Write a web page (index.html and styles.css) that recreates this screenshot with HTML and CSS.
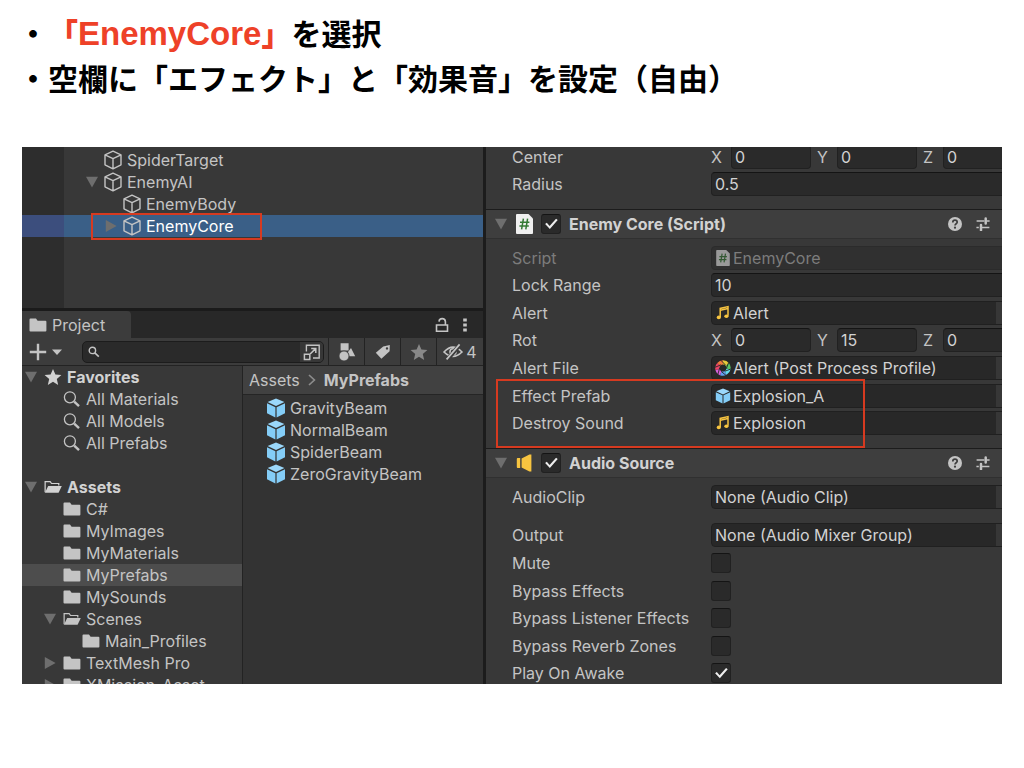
FILE: index.html
```html
<!DOCTYPE html>
<html lang="ja">
<head>
<meta charset="utf-8">
<title>EnemyCore</title>
<link rel="stylesheet" href="styles.css">
</head>
<body>
<svg class="defs" aria-hidden="true">
  <symbol id="cube" viewBox="0 0 20 20"><path d="M10 1.2 18 4.8V14.8L10 18.8 2 14.8V4.8ZM2 4.8 10 8.6 18 4.8M10 8.6V18.8" fill="none" stroke="currentColor" stroke-width="1.4" stroke-linejoin="round"/></symbol>
  <symbol id="prefab" viewBox="0 0 20 20"><path d="M10 .6 18.4 4 10 8 1.6 4Z" fill="#9bd8fb"/><path d="M1 5.2 9.4 9.2V19.4L1 15.2Z" fill="#84cdf7"/><path d="M19 5.2 10.6 9.2V19.4L19 15.2Z" fill="#84cdf7"/></symbol>
  <symbol id="folder" viewBox="0 0 18 18"><path d="M.5 3.6Q.5 2.6 1.5 2.6H7L8.6 4.8H16.4Q17.4 4.8 17.4 5.8V14.6Q17.4 15.6 16.4 15.6H1.5Q.5 15.6 .5 14.6Z" fill="currentColor"/></symbol>
  <symbol id="folder-open" viewBox="0 0 19 18"><path d="M1.2 14.5V3.3H6.5L8 5.3H15.6V7.5" fill="none" stroke="currentColor" stroke-width="1.3"/><path d="M4.4 8H18.8L15.4 15.2H1Z" fill="currentColor"/></symbol>
  <symbol id="star" viewBox="0 0 18 18"><path d="M9 1 11.4 6.6 17.4 7.1 12.8 11 14.2 17 9 13.8 3.8 17 5.2 11 .6 7.1 6.6 6.6Z" fill="currentColor"/></symbol>
  <symbol id="find" viewBox="0 0 18 18"><circle cx="6.9" cy="7.3" r="5.5" fill="none" stroke="currentColor" stroke-width="1.3"/><path d="M11.2 11.6 16 16.2" stroke="currentColor" stroke-width="2.4"/></symbol>
  <symbol id="lens" viewBox="0 0 12 12"><circle cx="4.4" cy="4.4" r="3.2" fill="none" stroke="currentColor" stroke-width="1.4"/><path d="M6.8 6.8 10.8 10.6" stroke="currentColor" stroke-width="1.6"/></symbol>
  <symbol id="down" viewBox="0 0 12 12"><path d="M0 .8H12L6 11.6Z" fill="currentColor"/></symbol>
  <symbol id="right" viewBox="0 0 12 12"><path d="M.8 0V12L11.6 6Z" fill="currentColor"/></symbol>
  <symbol id="note" viewBox="0 0 16 16"><path d="M5.2 12.2V3.4L13 1.6V10.8M5.2 5.2 13 3.4" fill="none" stroke="#f7c440" stroke-width="1.5"/><ellipse cx="3.8" cy="12.4" rx="2.1" ry="1.8" fill="#f7c440"/><ellipse cx="11.4" cy="11.2" rx="2.1" ry="1.8" fill="#f7c440"/></symbol>
  <symbol id="script" viewBox="0 0 17 20"><path d="M1 0H12.5L17 4.5V19Q17 20 16 20H1Q0 20 0 19V1Q0 0 1 0Z" fill="#f0f0f0"/><path d="M7.4 4.6 5.6 15.4M11.6 4.6 9.8 15.4M4 8.2H13.4M3.4 12H12.8" stroke="#347a34" stroke-width="1.5"/></symbol>
  <symbol id="aperture" viewBox="0 0 16 16"><g fill="none" stroke-width="4.2"><path d="M8 2.4A5.6 5.6 0 0 1 12.4 4.5" stroke="#e8c93a"/><path d="M12.4 4.5A5.6 5.6 0 0 1 13.5 9" stroke="#59c466"/><path d="M13.5 9A5.6 5.6 0 0 1 10.6 13" stroke="#62dcee"/><path d="M10.6 13A5.6 5.6 0 0 1 5.8 13.2" stroke="#5f9df0"/><path d="M5.8 13.2A5.6 5.6 0 0 1 2.5 9.4" stroke="#d760dc"/><path d="M2.5 9.4A5.6 5.6 0 0 1 3.8 4.3" stroke="#ee4466"/><path d="M3.8 4.3A5.6 5.6 0 0 1 8 2.4" stroke="#f07a3c"/></g><path d="M6 .4 10.4 5M13.6 2.6 11.4 8.4M15.8 9 10 11.2M11 15.4 6.2 11.4M3 14 4.6 8M.3 7.2 6 4.8" stroke="#262626" stroke-width=".9"/></symbol>
  <symbol id="speaker" viewBox="0 0 17 18"><path d="M.8 5Q.8 4 1.6 4H4.2V14H1.6Q.8 14 .8 13Z" fill="#f7c440"/><path d="M5.6 4.4 13.4.6H15.4V17.4H13.4L5.6 13.6Z" fill="#f7c440"/></symbol>
  <symbol id="help" viewBox="0 0 14 14"><circle cx="7" cy="7" r="7" fill="currentColor"/><path d="M4.8 5.4Q4.8 3.2 7 3.2T9.2 5.3C9.2 6.8 7 6.8 7 8.6" fill="none" stroke="#3e3e3e" stroke-width="1.7"/><circle cx="7" cy="10.7" r="1.1" fill="#3e3e3e"/></symbol>
  <symbol id="sliders" viewBox="0 0 14 14"><path d="M.6 4H8.4M11 4H13.6M.4 10.6H2.8M5.8 10.6H13.4" stroke="currentColor" stroke-width="1.5"/><path d="M9.7 1.4V6.6M5 8V13.2" stroke="currentColor" stroke-width="2.5" stroke-linecap="round"/></symbol>
  <symbol id="lock" viewBox="0 0 14 16"><path d="M1.5 8H12.5V14.2H1.5ZM4 4.6Q4.2 1.6 7.2 1.6T10.4 4.6V8" fill="none" stroke="currentColor" stroke-width="1.6"/></symbol>
  <symbol id="dots" viewBox="0 0 6 16"><path d="M1.2 1.4H4.8V4.6H1.2ZM1.2 6.4H4.8V9.6H1.2ZM1.2 11.4H4.8V14.6H1.2Z" fill="currentColor"/></symbol>
  <symbol id="plus" viewBox="0 0 18 18"><path d="M9 .8V17.2M.8 9H17.2" stroke="currentColor" stroke-width="2.4"/></symbol>
  <symbol id="caret" viewBox="0 0 12 12"><path d="M1 3.4H11L6 9Z" fill="currentColor"/></symbol>
  <symbol id="open" viewBox="0 0 18 18"><path d="M3.4 8.4V2.2H16.2V15H10" fill="none" stroke="currentColor" stroke-width="1.4"/><path d="M1.4 11.2H6.8V16.6H1.4ZM7.4 10.8 12.6 5.6M8.2 5.4H12.8V10" fill="none" stroke="currentColor" stroke-width="1.5"/></symbol>
  <symbol id="shapes" viewBox="0 0 18 18"><path d="M2.6.2H10.6V7.6H2.6ZM13 5 17.2 13.2H11.4L10 9Z" fill="currentColor"/><circle cx="6" cy="13" r="5" fill="currentColor" stroke="#3c3c3c" stroke-width=".8"/></symbol>
  <symbol id="tag" viewBox="0 0 16 16"><path fill-rule="evenodd" d="M8.2 2.6 14.8 1 14.6 7.2 6.4 14.8.8 8.8ZM12 3.2A1.2 1.2 0 1 0 12 5.6 1.2 1.2 0 1 0 12 3.2Z" fill="currentColor"/></symbol>
  <symbol id="eye" viewBox="0 0 20 18"><path d="M1 9Q10-.8 19 9 10 17.8 1 9Z" fill="none" stroke="currentColor" stroke-width="1.6"/><circle cx="10" cy="8.8" r="3" fill="none" stroke="currentColor" stroke-width="1.6"/><path d="M4.6 16.4 17.2 1.4" stroke="#3c3c3c" stroke-width="4"/><path d="M3.6 16.4 16.6 1.4" stroke="currentColor" stroke-width="1.7"/></symbol>
  <symbol id="chevron" viewBox="0 0 8 12"><path d="M1 1 6.4 6 1 11" fill="none" stroke="currentColor" stroke-width="1.7"/></symbol>
</svg>

<ul class="notes">
  <li>・<strong class="notes-name">「<span class="notes-latin">EnemyCore</span>」</strong>を選択</li>
  <li>・空欄に「エフェクト」と「効果音」を設定（自由）</li>
</ul>

<main class="editor">
  <div class="side">
    <ul class="hierarchy">
      <li class="row"><span class="arrow"></span><svg class="icon-cube"><use href="#cube"/></svg>SpiderTarget</li>
      <li class="row"><span class="arrow"><svg><use href="#down"/></svg></span><svg class="icon-cube"><use href="#cube"/></svg>EnemyAI</li>
      <li class="row nested"><span class="arrow"></span><svg class="icon-cube"><use href="#cube"/></svg>EnemyBody</li>
      <li class="row nested selected"><span class="arrow"><svg><use href="#right"/></svg></span><svg class="icon-cube"><use href="#cube"/></svg>EnemyCore<span class="mark mark-row"></span></li>
    </ul>
    <section class="project">
      <div class="tabs">
        <h2 class="tab"><svg class="icon-folder"><use href="#folder"/></svg>Project</h2>
        <button class="plain" aria-label="Lock"><svg class="icon-lock"><use href="#lock"/></svg></button>
        <button class="plain" aria-label="Menu"><svg class="icon-dots"><use href="#dots"/></svg></button>
      </div>
      <div class="toolbar">
        <button class="plain add" aria-label="Add"><svg class="icon-folder"><use href="#plus"/></svg><svg class="icon-small"><use href="#caret"/></svg></button>
        <div class="search">
          <svg class="icon-small"><use href="#lens"/></svg>
          <input class="search-input" type="text" aria-label="Search">
          <button class="plain search-open" aria-label="Open search"><svg class="icon-folder"><use href="#open"/></svg></button>
        </div>
        <button class="tool" aria-label="Filter by type"><svg class="icon-folder"><use href="#shapes"/></svg></button>
        <button class="tool" aria-label="Filter by label"><svg class="icon-mini"><use href="#tag"/></svg></button>
        <button class="tool dim" aria-label="Favorite"><svg class="icon-folder"><use href="#star"/></svg></button>
        <button class="tool hidden-count"><svg class="icon-eye"><use href="#eye"/></svg>4</button>
      </div>
      <div class="browser">
        <ul class="tree">
          <li class="row bold"><span class="arrow"><svg><use href="#down"/></svg></span><svg class="icon-folder"><use href="#star"/></svg>Favorites</li>
          <li class="row level1"><span class="arrow"></span><svg class="icon-folder"><use href="#find"/></svg>All Materials</li>
          <li class="row level1"><span class="arrow"></span><svg class="icon-folder"><use href="#find"/></svg>All Models</li>
          <li class="row level1"><span class="arrow"></span><svg class="icon-folder"><use href="#find"/></svg>All Prefabs</li>
          <li class="row bold group"><span class="arrow"><svg><use href="#down"/></svg></span><svg class="icon-folder"><use href="#folder-open"/></svg>Assets</li>
          <li class="row level1"><span class="arrow"></span><svg class="icon-folder"><use href="#folder"/></svg>C#</li>
          <li class="row level1"><span class="arrow"></span><svg class="icon-folder"><use href="#folder"/></svg>MyImages</li>
          <li class="row level1"><span class="arrow"></span><svg class="icon-folder"><use href="#folder"/></svg>MyMaterials</li>
          <li class="row level1 current"><span class="arrow"></span><svg class="icon-folder"><use href="#folder"/></svg>MyPrefabs</li>
          <li class="row level1"><span class="arrow"></span><svg class="icon-folder"><use href="#folder"/></svg>MySounds</li>
          <li class="row level1"><span class="arrow"><svg><use href="#down"/></svg></span><svg class="icon-folder"><use href="#folder-open"/></svg>Scenes</li>
          <li class="row level2"><span class="arrow"></span><svg class="icon-folder"><use href="#folder"/></svg>Main_Profiles</li>
          <li class="row level1"><span class="arrow"><svg><use href="#right"/></svg></span><svg class="icon-folder"><use href="#folder"/></svg>TextMesh Pro</li>
          <li class="row level1"><span class="arrow"><svg><use href="#right"/></svg></span><svg class="icon-folder"><use href="#folder"/></svg>XMission_Asset</li>
        </ul>
        <div class="files">
          <nav class="crumbs"><span>Assets</span><svg class="icon-chevron"><use href="#chevron"/></svg><b>MyPrefabs</b></nav>
          <ul class="file-list">
            <li class="row"><svg class="icon-cube"><use href="#prefab"/></svg>GravityBeam</li>
            <li class="row"><svg class="icon-cube"><use href="#prefab"/></svg>NormalBeam</li>
            <li class="row"><svg class="icon-cube"><use href="#prefab"/></svg>SpiderBeam</li>
            <li class="row"><svg class="icon-cube"><use href="#prefab"/></svg>ZeroGravityBeam</li>
          </ul>
        </div>
      </div>
    </section>
  </div>

  <div class="inspector">
    <div class="inspector-content">
      <div class="props props-collider">
        <div class="prop"><span>Center</span>
          <div class="vector">
            <label for="cx">X</label><input class="field" id="cx" type="text" value="0">
            <label for="cy">Y</label><input class="field" id="cy" type="text" value="0">
            <label for="cz">Z</label><input class="field" id="cz" type="text" value="0">
          </div>
        </div>
        <div class="prop"><label for="radius">Radius</label><input class="field" id="radius" type="text" value="0.5"></div>
      </div>

      <div class="component">
        <svg class="fold"><use href="#down"/></svg>
        <svg class="icon-script"><use href="#script"/></svg>
        <input class="check" id="core-on" type="checkbox" checked>
        <label class="component-name" for="core-on">Enemy Core (Script)</label>
        <button class="plain" aria-label="Help"><svg class="icon-head"><use href="#help"/></svg></button>
        <button class="plain" aria-label="Presets"><svg class="icon-head"><use href="#sliders"/></svg></button>
      </div>
      <div class="body">
        <div class="props props-core">
          <div class="prop disabled"><label for="script-file">Script</label><button class="field object" id="script-file" disabled><svg class="icon-mini"><use href="#script"/></svg><span>EnemyCore</span></button></div>
          <div class="prop"><label for="range">Lock Range</label><input class="field" id="range" type="text" value="10"></div>
          <div class="prop"><label for="alert">Alert</label><button class="field object" id="alert"><svg class="icon-mini"><use href="#note"/></svg><span>Alert</span></button></div>
          <div class="prop"><span>Rot</span>
            <div class="vector">
              <label for="rx">X</label><input class="field" id="rx" type="text" value="0">
              <label for="ry">Y</label><input class="field" id="ry" type="text" value="15">
              <label for="rz">Z</label><input class="field" id="rz" type="text" value="0">
            </div>
          </div>
          <div class="prop"><label for="alert-file">Alert File</label><button class="field object" id="alert-file"><svg class="icon-mini"><use href="#aperture"/></svg><span>Alert (Post Process Profile)</span></button></div>
          <div class="prop"><label for="effect">Effect Prefab</label><button class="field object" id="effect"><svg class="icon-mini"><use href="#prefab"/></svg><span>Explosion_A</span></button></div>
          <div class="prop"><label for="destroy">Destroy Sound</label><button class="field object" id="destroy"><svg class="icon-mini"><use href="#note"/></svg><span>Explosion</span></button></div>
        </div>
        <span class="mark mark-fields"></span>
      </div>

      <div class="component">
        <svg class="fold"><use href="#down"/></svg>
        <svg class="icon-script"><use href="#speaker"/></svg>
        <input class="check" id="audio-on" type="checkbox" checked>
        <label class="component-name" for="audio-on">Audio Source</label>
        <button class="plain" aria-label="Help"><svg class="icon-head"><use href="#help"/></svg></button>
        <button class="plain" aria-label="Presets"><svg class="icon-head"><use href="#sliders"/></svg></button>
      </div>
      <div class="body body-audio">
        <div class="props props-clip">
          <div class="prop"><label for="clip">AudioClip</label><button class="field object" id="clip"><span>None (Audio Clip)</span></button></div>
        </div>
        <div class="props props-output">
          <div class="prop"><label for="output">Output</label><button class="field object" id="output"><span>None (Audio Mixer Group)</span></button></div>
          <div class="prop"><label for="mute">Mute</label><input class="check" id="mute" type="checkbox"></div>
          <div class="prop"><label for="by-fx">Bypass Effects</label><input class="check" id="by-fx" type="checkbox"></div>
          <div class="prop"><label for="by-listener">Bypass Listener Effects</label><input class="check" id="by-listener" type="checkbox"></div>
          <div class="prop"><label for="by-reverb">Bypass Reverb Zones</label><input class="check" id="by-reverb" type="checkbox"></div>
          <div class="prop"><label for="awake">Play On Awake</label><input class="check" id="awake" type="checkbox" checked></div>
        </div>
      </div>
    </div>
  </div>
</main>
</body>
</html>
```
FILE: styles.css
```css
* { box-sizing: border-box; }

body {
  margin: 0;
  padding: 10px 22px;
  background: #fff;
  color: #c4c4c4;
  font: 16px/22px Inter, "Liberation Sans", sans-serif;
}

ul { list-style: none; margin: 0; padding: 0; }
svg { display: block; flex: none; }
button, input { font: inherit; color: inherit; margin: 0; }
.defs { position: absolute; width: 0; height: 0; }

/* Slide text */
.notes {
  margin: 0 -4px 47px;
  color: #000;
  font: bold 30px/45px "Noto Sans CJK JP", sans-serif;
  text-spacing-trim: space-all;
}
.notes li { height: 45px; }
.notes-name { color: #ee4128; }
.notes-latin { font: bold 33px/45px "Liberation Sans", sans-serif; }

/* Editor window */
.editor {
  display: grid;
  grid-template-columns: 461fr 519fr;
  overflow: hidden;
  background: #383838;
}
.side {
  display: flex;
  flex-direction: column;
  contain: size;
  overflow: hidden;
}
.row {
  display: flex;
  align-items: center;
  height: 22px;
  padding-bottom: 1px;
  white-space: nowrap;
}
.bold { font-weight: 700; color: #d2d2d2; }
.arrow { width: 19px; flex: none; color: #6e6e6e; }
.arrow svg { width: 12px; height: 12px; }

.icon-cube { width: 20px; height: 20px; margin-right: 4px; }
.icon-folder { width: 18px; height: 18px; }
.icon-mini { width: 16px; height: 16px; }
.icon-small { width: 12px; height: 12px; }
.icon-head { width: 14px; height: 14px; }
.icon-script { width: 17px; height: 20px; }
.icon-lock { width: 14px; height: 16px; }
.icon-dots { width: 6px; height: 16px; }
.icon-eye { width: 20px; height: 18px; }
.icon-chevron { width: 8px; height: 12px; color: #8c8c8c; }

.mark {
  position: absolute;
  border: 2px solid #d63a20;
  pointer-events: none;
}

/* Hierarchy */
.hierarchy {
  height: 164px;
  flex: none;
  padding-top: 2px;
  border-bottom: 3px solid #1b1b1b;
  background: linear-gradient(to right, #2d2d2d 42px, #383838 42px);
}
.hierarchy .row { padding-left: 62px; }
.hierarchy .arrow { padding-left: 2px; }
.hierarchy .nested { padding-left: 81px; }
.hierarchy .selected {
  position: relative;
  color: #fff;
  background: linear-gradient(to right, #3c4e7d 42px, #3a5f87 42px);
}
.selected .icon-cube { color: #c4c4c4; }
.mark-row { left: 69px; width: 171px; top: -2px; bottom: -3px; }

/* Project window */
.project { display: flex; flex-direction: column; flex: 1; min-height: 0; }
.plain { display: flex; align-items: center; padding: 0; border: 0; background: none; }
.tabs {
  display: flex;
  align-items: center;
  gap: 13px;
  height: 27px;
  padding-right: 15px;
  background: #282828;
}
.tab {
  display: flex;
  align-items: center;
  gap: 5px;
  height: 27px;
  width: 109px;
  margin: 0 auto 0 0;
  padding-left: 7px;
  border-radius: 0 4px 0 0;
  background: #3c3c3c;
  font-size: 16px;
  font-weight: 400;
}
.toolbar {
  display: flex;
  align-items: center;
  height: 28px;
  border-bottom: 1px solid #232323;
  background: #3c3c3c;
}
.add { gap: 4px; width: 53px; margin-left: 7px; }
.search {
  display: flex;
  flex: 1;
  align-items: center;
  height: 22px;
  min-width: 0;
  margin-right: 4px;
  padding-left: 5px;
  border: 1px solid #1c1c1c;
  border-radius: 5px;
  background: #2a2a2a;
  overflow: hidden;
}
.search-input { flex: 1; min-width: 0; padding: 0 4px; border: 0; background: none; }
.search-open { height: 20px; width: 23px; justify-content: center; background: #373737; }
.tool {
  display: flex;
  align-items: center;
  justify-content: center;
  width: 36px;
  height: 27px;
  padding: 0;
  border: 0;
  border-left: 1px solid #232323;
  background: none;
}
.dim { color: #888; }
.hidden-count { width: 47px; gap: 3px; }

.browser { display: grid; grid-template-columns: 221fr 240fr; flex: 1; min-height: 0; }
.tree { border-right: 1px solid #232323; overflow: hidden; }
.tree .row { padding-left: 3px; }
.tree .level1 { padding-left: 22px; }
.tree .level2 { padding-left: 41px; }
.tree .icon-folder { margin-right: 5px; }
.tree .group { margin-top: 22px; }
.tree .current { background: #4d4d4d; }
.files { background: #333; }
.crumbs {
  display: flex;
  align-items: center;
  gap: 8px;
  height: 29px;
  padding-left: 6px;
  border-bottom: 1px solid #252525;
  background: #414141;
}
.crumbs b { font-weight: 700; }
.file-list { padding: 2px 0 0 23px; }

/* Inspector */
.inspector { border-left: 3px solid #1c1c1c; overflow: hidden; }
.inspector-content { margin: -4px -21px -3px 0; }
.props { display: grid; padding-left: 26px; }
.props-collider { min-height: 55px; margin-bottom: 11px; }
.props-core { min-height: 193px; }
.props-clip { min-height: 28px; }
.props-output { min-height: 167px; }
.prop {
  display: grid;
  grid-template-columns: 199px minmax(0, 1fr);
  align-items: center;
}
.disabled { color: #7c7c7c; }
.vector {
  display: grid;
  grid-template-columns: 14px minmax(0, 1fr) 14px minmax(0, 1fr) 14px minmax(0, 1fr);
  column-gap: 6px;
  align-items: center;
}
.field {
  width: 100%;
  height: 24px;
  padding: 0 3px;
  border: 1px solid #212121;
  border-top-color: #141414;
  border-radius: 4px;
  background: #2a2a2a;
  color: #d2d2d2;
}
.object {
  display: flex;
  align-items: center;
  gap: 2px;
  border-color: #202020;
  background: linear-gradient(to left, #373737 26px, #282828 26px);
  text-align: left;
}
.disabled .object {
  border-color: #2b2b2b;
  background: #303030;
  color: #7c7c7c;
}
.disabled .icon-mini { opacity: 0.55; }
.component {
  display: flex;
  align-items: center;
  height: 30px;
  padding: 0 33px 0 8px;
  gap: 8px;
  border-top: 1px solid #1c1c1c;
  border-bottom: 1px solid #303030;
  background: #3e3e3e;
}
.fold { width: 14px; height: 12px; color: #6e6e6e; }
.component-name { flex: 1; font-weight: 700; color: #d2d2d2; }
.component .plain + .plain { margin-left: 6px; }
.check {
  appearance: none;
  display: grid;
  place-items: center;
  width: 20px;
  height: 20px;
  border: 1px solid #212121;
  border-top-color: #141414;
  border-radius: 3px;
  background: #2a2a2a;
}
.check:checked::before {
  content: "";
  width: 14px;
  height: 12px;
  background: #eee;
  clip-path: polygon(8% 50%, 20% 40%, 40% 66%, 86% 6%, 98% 16%, 42% 92%);
}
.body { position: relative; padding: 5px 0 11px; }
.body-audio { display: grid; row-gap: 9px; padding-bottom: 0; }
.mark-fields { left: 10px; width: 369px; top: 140px; bottom: 0; }
```
